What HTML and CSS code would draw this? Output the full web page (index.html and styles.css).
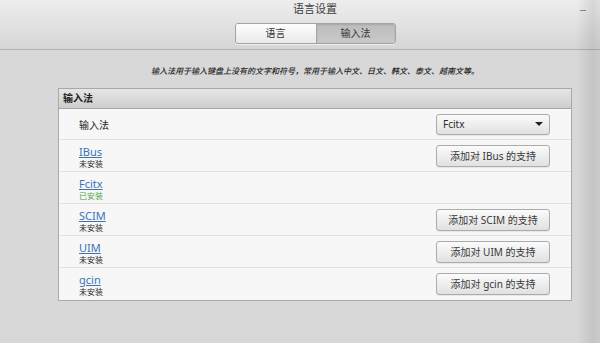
FILE: index.html
```html
<!DOCTYPE html>
<html lang="zh-CN">
<head>
<meta charset="utf-8">
<title>语言设置</title>
<link rel="stylesheet" href="styles.css">
</head>
<body>
<div class="window">
  <header class="titlebar">
    <div class="title">语言设置</div>
    <div class="tabs">
      <span class="tab">语言</span>
      <span class="tab active">输入法</span>
    </div>
    <span class="minimize"></span>
  </header>
  <main class="content">
    <p class="desc">输入法用于输入键盘上没有的文字和符号，常用于输入中文、日文、韩文、泰文、越南文等。</p>
    <section class="panel">
      <div class="panel-head">输入法</div>
      <div class="row first">
        <span class="label">输入法</span>
        <div class="combo"><span>Fcitx</span><span class="arrow"></span></div>
      </div>
      <div class="row">
        <div class="info"><a class="link" href="#">IBus</a><span class="status">未安装</span></div>
        <button class="btn">添加对 IBus 的支持</button>
      </div>
      <div class="row">
        <div class="info"><a class="link" href="#">Fcitx</a><span class="status ok">已安装</span></div>
      </div>
      <div class="row">
        <div class="info"><a class="link" href="#">SCIM</a><span class="status">未安装</span></div>
        <button class="btn">添加对 SCIM 的支持</button>
      </div>
      <div class="row">
        <div class="info"><a class="link" href="#">UIM</a><span class="status">未安装</span></div>
        <button class="btn">添加对 UIM 的支持</button>
      </div>
      <div class="row last">
        <div class="info"><a class="link" href="#">gcin</a><span class="status">未安装</span></div>
        <button class="btn">添加对 gcin 的支持</button>
      </div>
    </section>
  </main>
  <div class="edge-shade"></div>
</div>
</body>
</html>
```

FILE: styles.css
```css
html, body {
  margin: 0;
  padding: 0;
  width: 600px;
  height: 343px;
  overflow: hidden;
  background: #d8d8d8;
}
body {
  font-family: "Noto Sans", "Noto Sans CJK SC", sans-serif;
  color: #333;
}
.window {
  position: relative;
  width: 630px;
  height: 343px;
  background: #d8d8d8;
}
.titlebar {
  position: relative;
  height: 49px;
  border-bottom: 1px solid #b3b3b3;
  background: linear-gradient(#eeeeee, #d5d5d5);
  display: flex;
  flex-direction: column;
  align-items: center;
}
.title {
  margin-top: 2px;
  font-size: 11px;
  line-height: 14px;
  color: #3e3e3e;
}
.tabs {
  margin-top: 7px;
  display: flex;
  height: 19px;
  border: 1px solid #a2a2a2;
  border-radius: 3px;
  overflow: hidden;
  box-shadow: 0 1px 0 rgba(255,255,255,0.6);
}
.tab {
  width: 80px;
  font-size: 10px;
  line-height: 19px;
  text-align: center;
  color: #333;
  background: linear-gradient(#fdfdfd, #e9e9e9);
}
.tab.active {
  width: 78px;
  border-left: 1px solid #a6a6a6;
  background: linear-gradient(#bdbdbd, #c9c9c9);
  box-shadow: inset 0 1px 2px rgba(0,0,0,0.12);
}
.minimize {
  position: absolute;
  left: 580px;
  top: 10px;
  width: 6px;
  height: 1px;
  background: #8a8a8a;
}
.content {
  display: flex;
  flex-direction: column;
  align-items: center;
}
.desc {
  margin: 15px 0 0 0;
  font-size: 8px;
  line-height: 12px;
  font-style: italic;
  font-weight: 500;
  color: #262626;
}
.panel {
  margin-top: 11px;
  width: 512px;
  border: 1px solid #a9a9a9;
  background: #f7f7f7;
  display: flex;
  flex-direction: column;
}
.panel-head {
  height: 19px;
  padding-left: 4px;
  border-bottom: 1px solid #a6a6a6;
  background: linear-gradient(#e6e6e6, #cdcdcd);
  font-size: 10px;
  font-weight: bold;
  line-height: 19px;
  color: #222;
}
.row {
  height: 31px;
  border-bottom: 1px solid #e1e1e1;
  padding: 0 21px 0 20px;
  display: flex;
  align-items: center;
  justify-content: space-between;
}
.row.first {
  height: 30px;
}
.row.last {
  height: 32px;
  border-bottom: none;
}
.label {
  font-size: 10px;
  color: #222;
}
.info {
  align-self: flex-start;
  padding-top: 5px;
  display: flex;
  flex-direction: column;
}
.link {
  font-size: 11px;
  line-height: 13px;
  color: #3b73b3;
  text-decoration: underline;
}
.status {
  font-size: 8px;
  line-height: 11px;
  color: #2a2a2a;
}
.status.ok {
  color: #4fa646;
}
.combo, .btn {
  box-sizing: border-box;
  width: 114px;
  border: 1px solid #ababab;
  border-radius: 3px;
  background: linear-gradient(#fbfbfb, #e1e1e1);
  box-shadow: 0 1px 0 rgba(0,0,0,0.06);
  font-family: "Noto Sans", "Noto Sans CJK SC", sans-serif;
  font-size: 10px;
  color: #383838;
}
.combo {
  height: 21px;
  padding: 0 6px 0 6px;
  display: flex;
  align-items: center;
  justify-content: space-between;
  color: #2a2a2a;
}
.arrow {
  width: 0;
  height: 0;
  border-left: 4px solid transparent;
  border-right: 4px solid transparent;
  border-top: 4px solid #222;
}
.btn {
  height: 22px;
  padding: 0;
  text-align: center;
  line-height: 20px;
}
.edge-shade {
  position: absolute;
  top: 0;
  left: 576px;
  width: 24px;
  height: 343px;
  background: linear-gradient(to right, rgba(0,0,0,0), rgba(0,0,0,0.09) 70%, rgba(0,0,0,0.06));
  pointer-events: none;
}
```
